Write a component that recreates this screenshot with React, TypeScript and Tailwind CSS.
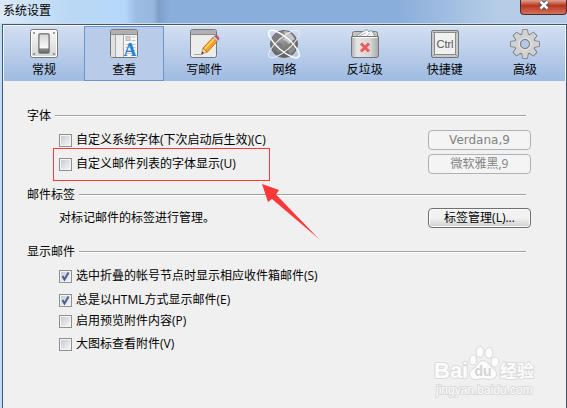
import React, { type ReactNode } from "react";

const GeneralIcon = () => (
  <svg width="32" height="32" viewBox="0 0 32 32">
    <defs>
      <linearGradient id="plate" x1="0" y1="0" x2="0" y2="1">
        <stop offset="0" stopColor="#fafafa" />
        <stop offset="1" stopColor="#d4d4d4" />
      </linearGradient>
      <linearGradient id="rocker" x1="0" y1="0" x2="0" y2="1">
        <stop offset="0" stopColor="#d6d6d6" />
        <stop offset="0.75" stopColor="#fbfbfb" />
        <stop offset="0.77" stopColor="#8f8f8f" />
        <stop offset="1" stopColor="#666" />
      </linearGradient>
    </defs>
    <rect x="2.5" y="2.5" width="27" height="28" rx="2" fill="url(#plate)" stroke="#75777a" />
    <rect x="3.5" y="3.5" width="25" height="26" rx="1" fill="none" stroke="#fff" />
    <circle cx="6" cy="6" r="1" fill="#808080" />
    <circle cx="26" cy="6" r="1" fill="#808080" />
    <circle cx="6" cy="27" r="1" fill="#808080" />
    <circle cx="26" cy="27" r="1" fill="#808080" />
    <rect x="10" y="6" width="12" height="21" rx="2" fill="#a8a8a8" />
    <rect x="11" y="7" width="10" height="19" rx="1" fill="url(#rocker)" stroke="#6c6c6c" />
  </svg>
);

const ViewIcon = () => (
  <svg width="32" height="32" viewBox="0 0 32 32">
    <rect x="2.5" y="2.5" width="27" height="28" rx="2" fill="#ededed" stroke="#75777a" />
    <rect x="3" y="3" width="26" height="4" rx="1" fill="#b0b0b0" />
    <path d="M3 7.5h26" stroke="#8b8b8b" />
    <rect x="3" y="8" width="4" height="22" fill="#e0e0e0" />
    <path d="M7.5 8v22M15.5 8v22" stroke="#a9a9a9" />
    <rect x="16" y="8" width="13" height="22" fill="#f7f7f7" />
    <rect x="18" y="9.5" width="4" height="4" fill="#d3d3d3" stroke="#b8b8b8" />
    <path d="M23.5 10h4M23.5 13.5h4M17.5 17.5h10M17.5 20.5h10M17.5 23.5h10M17.5 26.5h10" stroke="#c3c3c3" />
    <text x="22" y="29" textAnchor="middle" fontFamily="Liberation Serif, serif" fontWeight="700" fontSize="18" fill="#2583d6">
      A
    </text>
  </svg>
);

const ComposeIcon = () => (
  <svg width="32" height="32" viewBox="0 0 32 32">
    <rect x="2.5" y="2.5" width="26" height="28" rx="2" fill="#ececec" stroke="#75777a" />
    <rect x="3" y="3" width="25" height="4" rx="1" fill="#b0b0b0" />
    <path d="M3 7.5h25" stroke="#8b8b8b" />
    <path d="M6 27.5h9" stroke="#aaa" />
    <path d="M13.5 27l1.5-6 4.5 4z" fill="#f2d4a2" stroke="#996b31" strokeWidth="0.6" />
    <path d="M13.5 27l.6-2.4 1.7 1.5z" fill="#333" />
    <path d="M15 21l10-10.5 4 4-9.5 10.5z" fill="#f7a521" stroke="#a8640d" strokeWidth="0.8" />
    <path d="M16.5 22l10-10.5" stroke="#ffd67a" strokeWidth="1.4" />
    <path d="M25 10.5l1.5-1.5 4 4-1.5 1.5z" fill="#ddd" stroke="#777" strokeWidth="0.6" />
    <path d="M26.5 9c1-1 2.5-.7 3.4.3s1.4 2.4.6 3.7z" fill="#cf5c72" stroke="#9b4054" strokeWidth="0.6" />
  </svg>
);

const NetworkIcon = () => (
  <svg width="36" height="32" viewBox="-2 0 36 32">
    <defs>
      <radialGradient id="globe" cx="0.4" cy="0.3" r="0.7">
        <stop offset="0" stopColor="#a2a2a2" />
        <stop offset="1" stopColor="#5c5c5c" />
      </radialGradient>
    </defs>
    <circle cx="16" cy="17" r="13.5" fill="url(#globe)" stroke="#6a6a6a" />
    <path d="M5 12c2-4 5-6 8-7l3 2-1 3-4 1-1 4 4 2 1 4-3 4-3-1-1-5-4-3z" fill="#7d7d7d" />
    <path d="M16 4c5 0 9 4 11 8l-3 2-3 3-3-3-3-1 2-5z" fill="#c4c4c4" />
    <path d="M20 20l6-2 2 2c-1 4-3 6-6 8l-2-4z" fill="#8b8b8b" />
    <ellipse cx="16" cy="17" rx="19.5" ry="6.5" transform="rotate(41 16 17)" fill="none" stroke="#fff" strokeWidth="1.4" />
    <ellipse cx="16" cy="17" rx="19.5" ry="6.5" transform="rotate(-41 16 17)" fill="none" stroke="#eceef0" />
  </svg>
);

const JunkIcon = () => (
  <svg width="32" height="32" viewBox="0 0 32 32">
    <defs>
      <linearGradient id="bin">
        <stop offset="0" stopColor="#b0b0b0" />
        <stop offset="0.2" stopColor="#e6e6e6" />
        <stop offset="0.7" stopColor="#d6d6d6" />
        <stop offset="1" stopColor="#a8a8a8" />
      </linearGradient>
    </defs>
    <rect x="3.5" y="4.5" width="25" height="8" rx="2" fill="#c4c4c4" stroke="#75777a" />
    <path d="M6 10l7-5 5-2.5 1.5 2 3.5-1 3 6.5z" fill="#f7f7f7" stroke="#888" strokeWidth="0.8" />
    <path d="M10 9l7-3M18 9l3-3" stroke="#bbb" />
    <path d="M2.5 9.5h27v19a2 2 0 0 1-2 2h-23a2 2 0 0 1-2-2z" fill="url(#bin)" stroke="#75777a" />
    <path d="M3.5 10.5h25" stroke="#fff" />
    <path d="M12 16.5l8 8M20 16.5l-8 8" stroke="#f05a5a" strokeWidth="3" />
  </svg>
);

const ShortcutIcon = () => (
  <svg width="32" height="32" viewBox="0 0 32 32">
    <rect x="2.5" y="3.5" width="27" height="27" rx="1.5" fill="#c8c8c8" stroke="#75777a" />
    <path d="M3.5 4.5l3 3M28.5 4.5l-3 3M3.5 29.5l4-4M28.5 29.5l-4-4" stroke="#8a8a8a" />
    <rect x="5.5" y="5.5" width="21" height="22" fill="#f0f0f0" stroke="#8c8c8c" />
    <text x="16" y="21" textAnchor="middle" fontFamily="Liberation Sans, sans-serif" fontSize="11" fill="#555">
      Ctrl
    </text>
  </svg>
);

const teeth = [0, 45, 90, 135, 180, 225, 270, 315];

const AdvancedIcon = () => (
  <svg width="32" height="32" viewBox="0 0 32 32">
    <g fill="#77797c" stroke="#77797c" strokeWidth="1.6" strokeLinejoin="round">
      {teeth.map((a) => (
        <path key={a} d="M13 8l.8-5h4.4l.8 5z" transform={`rotate(${a} 16 17)`} />
      ))}
      <circle cx="16" cy="17" r="10" />
    </g>
    <g fill="#d2d2d2">
      {teeth.map((a) => (
        <path key={a} d="M13 8l.8-5h4.4l.8 5z" transform={`rotate(${a} 16 17)`} />
      ))}
      <circle cx="16" cy="17" r="10" />
    </g>
    <circle cx="16" cy="17" r="6" fill="#c0c0c0" stroke="#ededed" />
    <circle cx="16" cy="17" r="4.5" fill="#b4c8e6" stroke="#77797c" />
  </svg>
);

const tabs = [
  { label: "常规", icon: <GeneralIcon /> },
  { label: "查看", icon: <ViewIcon /> },
  { label: "写邮件", icon: <ComposeIcon /> },
  { label: "网络", icon: <NetworkIcon /> },
  { label: "反垃圾", icon: <JunkIcon /> },
  { label: "快捷键", icon: <ShortcutIcon /> },
  { label: "高级", icon: <AdvancedIcon /> },
];

const Legend = ({ children }: { children: ReactNode }) => (
  <h2 className="flex h-5 items-center gap-1 pr-10">
    <span>{children}</span>
    <span className="h-[2px] flex-1 border-t border-[#a0a0a0] bg-white" />
  </h2>
);

const Check = ({ label, checked = false }: { label: string; checked?: boolean }) => (
  <label className="flex items-center gap-1 whitespace-nowrap">
    <span className="grid">
      <input
        type="checkbox"
        defaultChecked={checked}
        className="peer col-start-1 row-start-1 size-[13px] appearance-none border border-[#8e8f8f] bg-linear-to-br from-[#c4c8cf] to-[#f8f8f8] shadow-[inset_0_0_0_1px_#f4f4f4]"
      />
      <svg viewBox="0 0 13 13" className="pointer-events-none invisible col-start-1 row-start-1 size-[13px] peer-checked:visible">
        <path d="M3.5 6l2 3.5 4-7" fill="none" stroke="#4a5f97" strokeWidth="2" />
      </svg>
    </span>
    <span>{label}</span>
  </label>
);

const Watermark = () => (
  <svg width="104" height="54" viewBox="0 0 104 54" className="pointer-events-none absolute right-[30px] bottom-[10px]">
    <g
      fill="#fcfcfc"
      stroke="#dadada"
      strokeWidth="2"
      strokeLinejoin="round"
      paintOrder="stroke"
      fontFamily="Liberation Sans, Noto Sans CJK SC, sans-serif"
    >
      <text x="2" y="34" fontSize="22" fontWeight="700">Bai</text>
      <ellipse cx="41" cy="16" rx="3" ry="4.5" />
      <ellipse cx="48" cy="8" rx="3.5" ry="5" />
      <ellipse cx="57" cy="9" rx="3.5" ry="5" />
      <ellipse cx="63" cy="18" rx="3.5" ry="4.5" />
      <path d="M51 17c4 0 6 4 9 7s5 4 4 7-4 4-7 4-4-1-6-1-4 1-7 1-6-2-6-5 2-4 5-6 4-7 8-7z" />
      <text x="51" y="32" fontSize="14" fontWeight="700" textAnchor="middle" fill="#d4d4d4" stroke="none">du</text>
      <text x="68" y="33" fontSize="17" fontWeight="700">经验</text>
      <text x="4" y="50" fontSize="12">jingyan.baidu.com</text>
    </g>
  </svg>
);

const App = () => {
  return (
    <div className="flex min-h-screen flex-col bg-[#bfdcf8] pl-[2px] font-['Open_Sans','Noto_Sans_CJK_SC',sans-serif] text-xs text-black">
      <header className="-ml-[2px] flex h-6 items-start justify-between border-b border-[#c9dcf2] bg-[linear-gradient(90deg,#dcebfa_0%,#bbd8f5_12%,#b5d8fa_22%,#9cbce4_24%,#98b8e0_27%,#7f9fc9_28%,#8aaedb_30%,#8aaedb_70%,#b6cde8_88%)]">
        <h1 className="pt-[3px] pl-[3px] leading-4">系统设置</h1>
        <button
          type="button"
          aria-label="关闭"
          className="flex h-[15px] w-[47px] items-start justify-center rounded-b-sm border border-t-0 border-[#4b2a33] bg-linear-to-b from-[#dfa294] via-[#b8341d] via-40% to-[#d4705a]"
        >
          <svg width="12" height="11" viewBox="0 0 12 11">
            <path d="M2.5 1.5l7 7M9.5 1.5l-7 7" stroke="#4c4c5c" strokeWidth="4.5" />
            <path d="M2.5 1.5l7 7M9.5 1.5l-7 7" stroke="#fff" strokeWidth="2.5" />
          </svg>
        </button>
      </header>

      <div className="relative flex flex-1 flex-col border-x border-t border-[#45566e] bg-[#f0f0f0]">
        <nav className="flex border-x border-t border-[#f4f7fb] bg-linear-to-b from-[#d3dff1] to-[#9fbbe2]">
          {tabs.map((tab, i) => (
            <button
              key={tab.label}
              type="button"
              className={
                i === 1
                  ? "flex h-[55px] flex-1 flex-col items-center gap-[3px] border border-[#6b95cf] bg-[#b8cbe9]"
                  : "flex h-[55px] flex-1 flex-col items-center gap-[3px] border border-transparent"
              }
            >
              {tab.icon}
              <span className="leading-4">{tab.label}</span>
            </button>
          ))}
        </nav>

        <main className="flex flex-col gap-[11px] pt-[25px] pl-6">
          <section>
            <Legend>字体</Legend>
            <div className="flex h-7 items-center justify-between pr-[35px] pl-8">
              <Check label="自定义系统字体(下次启动后生效)(C)" />
              <button type="button" disabled className="h-5 w-[103px] rounded-sm border border-[#adb2b5] bg-[#f4f4f4] font-['DejaVu_Sans'] text-[#838383]">
                Verdana,9
              </button>
            </div>
            <div className="relative flex h-5 items-center justify-between pr-[35px] pl-8">
              <Check label="自定义邮件列表的字体显示(U)" />
              <button type="button" disabled className="h-5 w-[103px] rounded-sm border border-[#adb2b5] bg-[#f4f4f4] leading-4 text-[#838383]">
                微软雅黑,9
              </button>
              <div className="pointer-events-none absolute -top-[6px] left-[26px] h-[33px] w-[217px] border border-[#fc3838]" />
              <svg width="58" height="56" viewBox="0 0 58 56" className="pointer-events-none absolute top-[30px] left-[235px]">
                <path d="M0 0l17 6-3 4.5 43 44.5-47-40-4 3z" fill="#fc3838" />
              </svg>
            </div>
          </section>

          <section>
            <Legend>邮件标签</Legend>
            <div className="flex h-[26px] items-center justify-between pr-[35px] pl-8">
              <p>对标记邮件的标签进行管理。</p>
              <button type="button" className="h-5 w-[103px] rounded-sm border border-[#707070] bg-linear-to-b from-[#f2f2f2] from-50% to-[#cfcfcf] leading-4 shadow-[inset_0_0_0_1px_#fbfbfb]">
                标签管理(L)...
              </button>
            </div>
          </section>

          <section>
            <Legend>显示邮件</Legend>
            <div className="grid grid-rows-[28px_20px_22px_24px] items-center pl-8">
              <Check label="选中折叠的帐号节点时显示相应收件箱邮件(S)" checked />
              <Check label="总是以HTML方式显示邮件(E)" checked />
              <Check label="启用预览附件内容(P)" />
              <Check label="大图标查看附件(V)" />
            </div>
          </section>
        </main>
        <Watermark />
      </div>
    </div>
  );
};

export default App;
